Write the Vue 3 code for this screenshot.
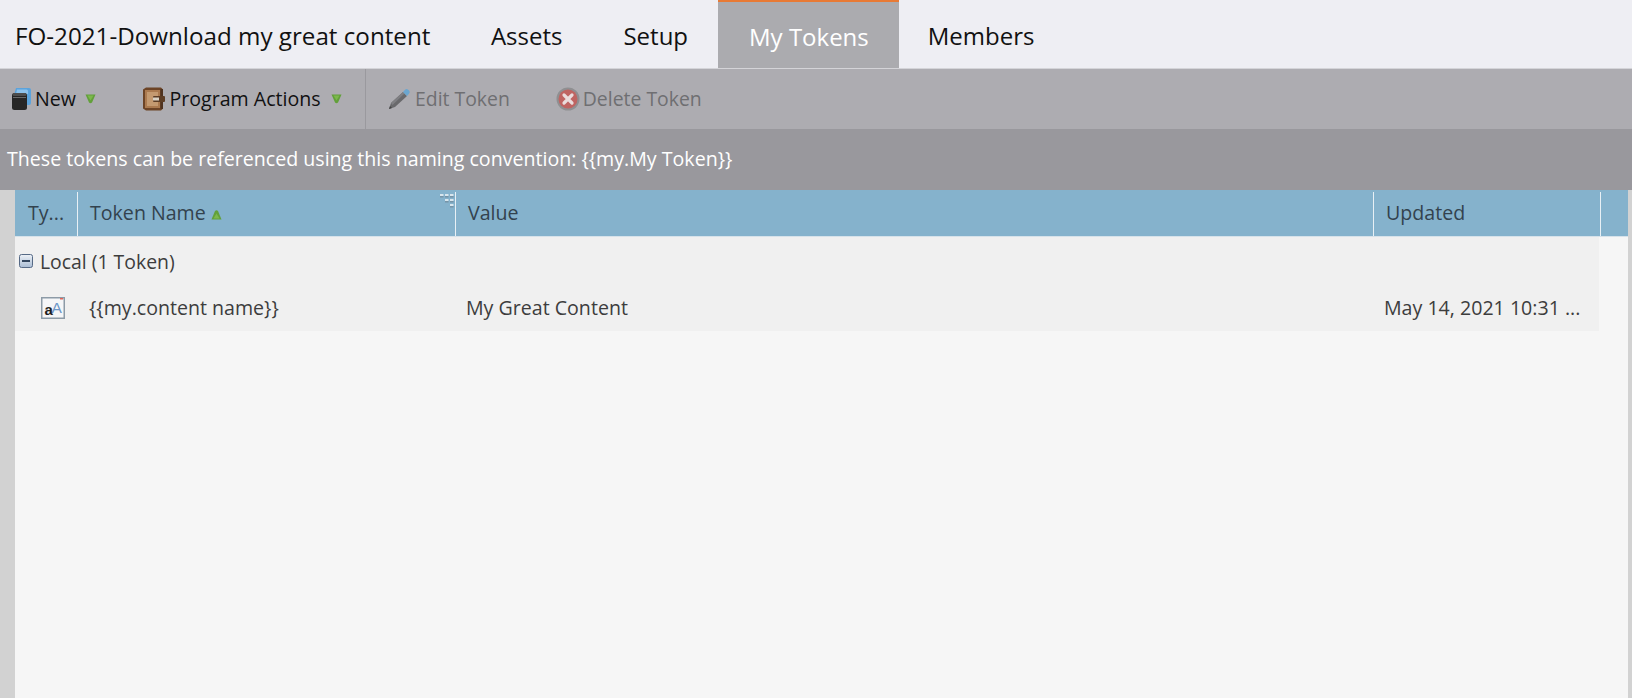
<script setup>
const tabs = [
  { label: 'Assets', active: false },
  { label: 'Setup', active: false },
  { label: 'My Tokens', active: true },
  { label: 'Members', active: false },
]
const gripDots = [
  [0, 0], [5, 0], [10, 0],
  [5, 5], [10, 5],
  [10, 10],
]
</script>

<template>
  <div class="page">
    <header class="tabs">
      <div class="title">FO-2021-Download my great content</div>
      <div v-for="t in tabs" :key="t.label" class="tab" :class="{ active: t.active }">{{ t.label }}</div>
    </header>

    <div class="toolbar">
      <div class="group first">
        <button class="tool new">
          <svg class="ic" width="19" height="22" viewBox="0 0 19 22">
            <path d="M4 0H17a2 2 0 0 1 2 2v13a2 2 0 0 1-2 2h-2V7H2z" fill="#5ba3dc"/>
            <path d="M5 1.500h9.500a1.500 1.500 0 0 1 1.500 1.500v3H4z" fill="#8cc2ec"/>
            <rect x="0" y="5" width="15" height="17" rx="2.500" fill="#262626"/>
            <rect x="0.500" y="5" width="14" height="3" rx="1.500" fill="#4d4d4d"/>
            <rect x="1" y="9" width="13" height="1" fill="#6a6a6a"/>
          </svg>
          <span>New</span>
          <svg class="tri" width="11" height="10" viewBox="0 0 11 10">
            <path d="M0.500 .5h10L7 8.500q-1.500 1.500-3 0z" fill="#62a03a"/>
            <path d="M2.500 1.500h6L5.500 6.500z" fill="#7cb84c"/>
          </svg>
        </button>
        <button class="tool actions">
          <svg class="ic" width="22" height="24" viewBox="0 0 22 24">
            <path d="M0 2.500L3 .5h15l1.500 1.500v20L18 23.500H3L0 21.500z" fill="#6d4426"/>
            <path d="M2 3h15v18H2z" fill="#ab7a4f"/>
            <path d="M4 5h11v14H4z" fill="#c49a70"/>
            <rect x="17.500" y="2" width="2.500" height="20" fill="#4f3320"/>
            <rect x="10" y="9" width="12" height="6" rx="1" fill="#5c3d25"/>
            <rect x="10" y="10.500" width="6" height="3" fill="#d9d2c4"/>
          </svg>
          <span>Program Actions</span>
          <svg class="tri" width="11" height="10" viewBox="0 0 11 10">
            <path d="M0.500 .5h10L7 8.500q-1.500 1.500-3 0z" fill="#62a03a"/>
            <path d="M2.500 1.500h6L5.500 6.500z" fill="#7cb84c"/>
          </svg>
        </button>
      </div>
      <div class="group disabled">
        <button class="tool edit">
          <svg class="ic" width="23" height="22" viewBox="0 0 23 22">
            <path d="M1 21l2-6L15 4l4 4L7 19z" fill="#69696c"/>
            <path d="M3 15l12-11 1.500 1.500L4.500 17z" fill="#7f7f83"/>
            <path d="M15 4l2-2.200a2.200 2.200 0 0 1 3.200 0l.8.8a2.200 2.200 0 0 1 0 3.200L19 8z" fill="#6ba6cf"/>
            <path d="M1 21l1-3 2 2z" fill="#444"/>
          </svg>
          <span>Edit Token</span>
        </button>
        <button class="tool del">
          <svg class="ic" width="24" height="24" viewBox="0 0 24 24">
            <circle cx="12" cy="12" r="11.500" fill="#8f8f91"/>
            <circle cx="12" cy="12" r="9.500" fill="#bf6462"/>
            <path d="M8 8l8 8M16 8l-8 8" stroke="#eadcdc" stroke-width="3.200" stroke-linecap="round"/>
          </svg>
          <span>Delete Token</span>
        </button>
      </div>
    </div>

    <div class="note">These tokens can be referenced using this naming convention: &#123;&#123;my.My Token&#125;&#125;</div>

    <main class="body">
      <div class="rail"></div>
      <div class="grid">
        <div class="head">
          <div class="hc c1">Ty...</div>
          <div class="hc c2">
            Token Name
            <svg class="up" width="11" height="10" viewBox="0 0 11 10">
              <path d="M4 1q1.500-1.500 3 0l3.500 8.500h-10z" fill="#62a03a"/>
              <path d="M5.500 3.500L8.500 8.500h-6z" fill="#7cb84c"/>
            </svg>
            <svg class="grip" width="14" height="14" viewBox="0 0 14 14">
              <g v-for="d in gripDots" :key="d.join()">
                <rect :x="d[0]" :y="d[1]" width="3.500" height="2" fill="#e6eef3" fill-opacity=".85"/>
                <rect :x="d[0]" :y="d[1] + 2" width="3.500" height="1.500" fill="#6f8797" fill-opacity=".7"/>
              </g>
            </svg>
          </div>
          <div class="hc c3">Value</div>
          <div class="hc c4">Updated</div>
          <div class="hc c5"></div>
        </div>
        <div class="rows">
          <div class="group-row">
            <svg class="minus" width="14" height="14" viewBox="0 0 14 14">
              <defs>
                <linearGradient id="minusFill" x1="0" y1="0" x2="0" y2="1">
                  <stop offset="0" stop-color="#eef2f7"/>
                  <stop offset="1" stop-color="#a9bcd4"/>
                </linearGradient>
              </defs>
              <rect x=".5" y=".5" width="13" height="13" rx="2" fill="url(#minusFill)" stroke="#566a86"/>
              <rect x="3" y="6" width="8" height="2" fill="#33465f"/>
            </svg>
            <span>Local (1 Token)</span>
          </div>
          <div class="row">
            <div class="c1 cell">
              <svg width="24" height="22" viewBox="0 0 24 22">
                <rect x=".75" y=".75" width="22.500" height="20.500" fill="#f5f6f8" stroke="#8d9ba7" stroke-width="1.500"/>
                <rect x="19" y="1" width="3" height="1.500" fill="#e0665a"/>
                <text x="10.500" y="16" class="icon-big">A</text>
                <text x="3.500" y="18" class="icon-small">a</text>
              </svg>
            </div>
            <div class="c2 cell">&#123;&#123;my.content name&#125;&#125;</div>
            <div class="c3 cell">My Great Content</div>
            <div class="c4 cell">May 14, 2021 10:31 ...</div>
          </div>
        </div>
      </div>
      <div class="rail-right"></div>
    </main>
  </div>
</template>

<style>
html, body { margin: 0; background: #f6f6f6; overflow: hidden; }
</style>

<style scoped>
.page {
  width: 1632px;
  height: 698px;
  display: flex;
  flex-direction: column;
  font-family: "Open Sans", "Noto Sans", sans-serif;
  overflow: hidden;
  background: #f6f6f6;
}
.tabs {
  height: 68px;
  flex: none;
  display: flex;
  background: #eeeef3;
  border-bottom: 1px solid #d4d4d8;
  font-size: 24px;
  color: #111;
}
.title { padding: 0 30px 0 15px; font-size: 24.2px; line-height: 72px; white-space: nowrap; }
.tab { padding: 0 30.5px; line-height: 72px; white-space: nowrap; }
.tab.active {
  background: #ababaf;
  color: #fff;
  border-top: 2px solid #e87a35;
  line-height: 70px;
  height: 66px;
  margin-left: -1px;
  padding: 0 30px 0 31.5px;
}
.tab.active + .tab { padding-left: 29px; }
.toolbar {
  height: 60px;
  flex: none;
  display: flex;
  align-items: stretch;
  background: #adacb1;
  font-size: 19.6px;
  color: #111;
}
.group { display: flex; align-items: center; box-sizing: border-box; padding-bottom: 1px; }
.group.first { border-right: 1px solid #9a999e; width: 366px; flex: none; }
.tool {
  border: 0;
  padding: 0;
  background: none;
  font: inherit;
  color: inherit;
  display: flex;
  align-items: center;
}
.ic { flex: none; }
.tool.new { margin-left: 12px; gap: 4px; }
.tool.new .tri { margin-left: 5px; }
.tool.actions { margin-left: 47.5px; gap: 4px; }
.tool.actions .tri { margin-left: 6px; }
.disabled { color: #6f6f72; font-size: 19.4px; }
.tool.edit { margin-left: 22px; gap: 4px; }
.tool.del { margin-left: 46px; gap: 3px; }
.note {
  height: 61px;
  flex: none;
  box-sizing: border-box;
  background: #99989d;
  color: #fff;
  font-size: 19.6px;
  line-height: 59px;
  padding-left: 7px;
  white-space: nowrap;
}
.body { flex: 1; display: flex; min-height: 0; }
.rail { width: 15px; flex: none; background: #d2d2d2; }
.rail-right { width: 4px; flex: none; background: #d2d2d2; }
.grid { flex: 1; min-width: 0; display: flex; flex-direction: column; }
.head {
  height: 44px;
  padding-top: 2px;
  flex: none;
  display: flex;
  background: #85b2cc;
  border-bottom: 1px solid #d6e2ea;
  color: #33424e;
  font-size: 19.6px;
  line-height: 42px;
}
.c1 { width: 63px; flex: none; box-sizing: border-box; }
.c2 { width: 378px; flex: none; box-sizing: border-box; }
.c3 { width: 918px; flex: none; box-sizing: border-box; }
.c4 { width: 227px; flex: none; box-sizing: border-box; }
.c5 { flex: 1; }
.hc { padding-left: 12px; border-right: 1px solid #e8f0f5; position: relative; white-space: nowrap; }
.hc.c1 { padding-left: 13px; }
.hc.c5 { border-right: 0; padding: 0; }
.grip { position: absolute; top: 2px; right: 1px; }
.rows { width: 1584px; background: #f0f0f0; color: #3d3d3d; font-size: 19.6px; }
.group-row {
  height: 47px;
  display: flex;
  align-items: center;
  padding-left: 4px;
  gap: 7px;
  font-size: 19.4px;
}
.group-row span { padding-top: 2px; }
.minus { flex: none; margin-top: 1px; }
.row { height: 46px; padding-bottom: 1px; display: flex; align-items: center; }
.cell { padding-left: 11px; white-space: nowrap; }
.row .c1 { padding-left: 26px; line-height: 0; margin-top: 2px; }
.row .c3 { padding-left: 10px; }
.row .c4 { padding-left: 10px; }
.icon-big { font-family: "Liberation Sans", sans-serif; font-size: 15.5px; fill: #6d97c8; }
.icon-small { font-family: "Liberation Sans", sans-serif; font-size: 15px; font-weight: 700; fill: #1f1f1f; }
</style>
